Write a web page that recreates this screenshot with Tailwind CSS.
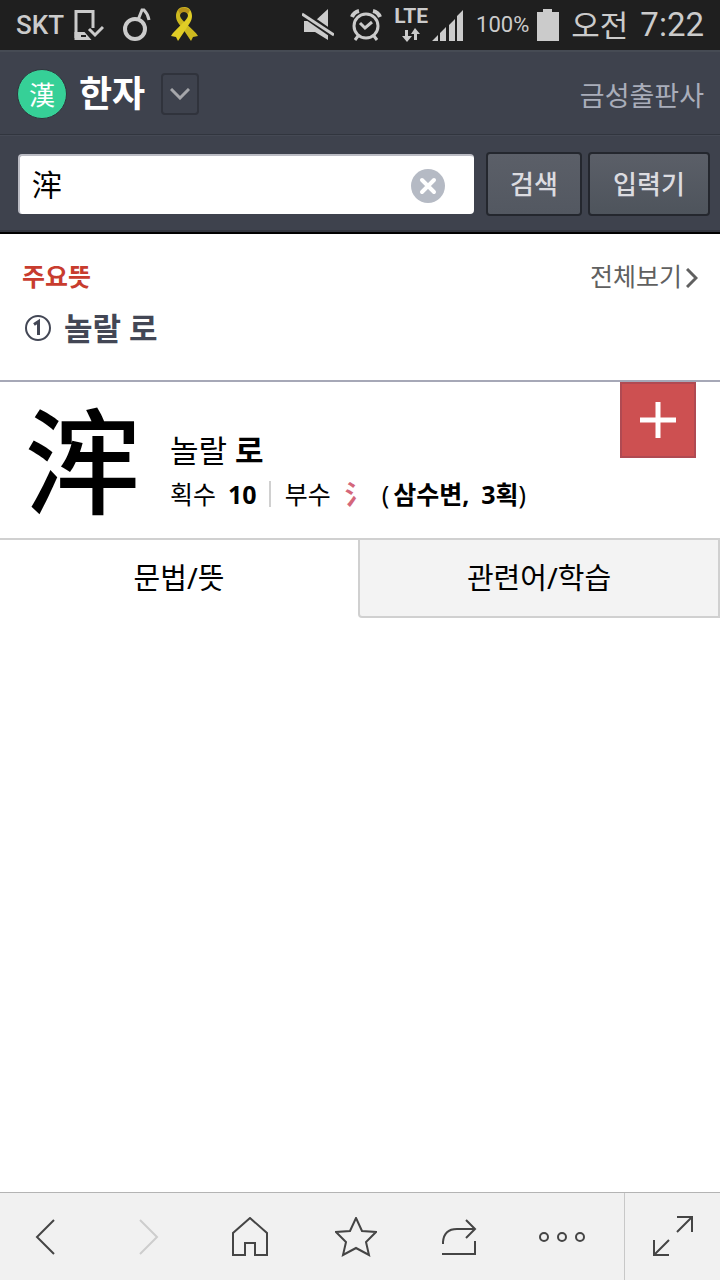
<!DOCTYPE html>
<html lang="ko">
<head>
    <meta charset="UTF-8">
    <meta name="viewport" content="width=device-width, initial-scale=1.0">
    <title>한자 - 浶</title>
    <script src="https://cdn.jsdelivr.net/npm/@tailwindcss/browser@4"></script>
</head>
<body class="min-h-screen flex flex-col bg-white text-black font-['Noto_Sans','Noto_Sans_CJK_KR',sans-serif]">

    <!-- Phone status bar -->
    <div class="h-[50px] shrink-0 px-4 flex items-center justify-between bg-[#1f1f1f] text-[#cbcbcb]">
        <div class="flex items-center">
            <span class="font-['Roboto',sans-serif] font-medium text-[26px] leading-8">SKT</span>
            <svg class="ml-2 w-8 h-8" viewBox="0 0 32 32" fill="none" stroke="currentColor">
                <path d="M21 19V2.500H4V29" stroke-width="3"/>
                <path d="M2.500 23h10l7 8h-17z" fill="currentColor" stroke="none"/>
                <path d="M9 27h5" stroke="#1f1f1f" stroke-width="2"/>
                <path d="M17 20l6 6 8-8" stroke-width="3"/>
            </svg>
            <svg class="ml-4 w-8 h-9" viewBox="0 0 32 36" fill="none" stroke="currentColor">
                <circle cx="15" cy="22" r="10" stroke-width="4"/>
                <path d="M18 13l4-10h2q4 4 5 10" stroke-width="3"/>
            </svg>
            <!-- Yellow ribbon -->
            <svg class="ml-4 w-8 h-9" viewBox="0 0 32 36">
                <path d="M16 0C10 0 8 5 8 9c0 5 3 8 7 13l8 12 2-4 5-1C26 22 13 14 12 9c0-3 2-5 4-5z" fill="#cdb91f"/>
                <path d="M16 0c6 0 8 5 8 9 0 5-3 8-6 13l-8 12-2-4-5-1C7 22 19 14 20 9c0-3-2-5-4-5z" fill="#e0cd26"/>
                <path d="M10 3q6-5 12 0l-2 4q-4-4-8 0z" fill="#b8921a"/>
            </svg>
        </div>
        <div class="flex items-center">
            <svg class="w-8 h-8" viewBox="0 0 32 32" fill="currentColor">
                <path d="M2 12h11L26 0v31L13 23H2z"/>
                <path d="M0 4l33 23" stroke="#1f1f1f" stroke-width="7"/>
                <path d="M0 5l32 21" stroke="currentColor" stroke-width="3"/>
                <path d="M2 14v8h11l5 3z"/>
            </svg>
            <svg class="ml-4 w-8 h-8" viewBox="0 0 32 32" fill="none" stroke="currentColor" stroke-width="3">
                <circle cx="16" cy="17" r="12"/>
                <path d="M10 14l5 5 7-6M8 27l-3 4M24 27l3 4"/>
                <path d="M2 8q2-5 7-6M30 8q-2-5-7-6" stroke-width="4"/>
            </svg>
            <div class="ml-3 flex flex-col items-center">
                <span class="font-['Roboto',sans-serif] font-bold text-[21px] leading-4">LTE</span>
                <svg class="mt-1 w-5 h-[14px]" viewBox="0 0 20 14" fill="currentColor">
                    <path d="M4 2h3v6h4l-5 6-5-6h3zM13 12h3V6h3l-5-6-4 6h3z"/>
                </svg>
            </div>
            <svg class="ml-1 w-8 h-8" viewBox="0 0 32 32" fill="currentColor">
                <path d="M0 32l6-6v6zM8 24l6-6v14H8zM17 16l6-6v22h-6zM25 7l6-6v31h-6z"/>
            </svg>
            <span class="ml-3 font-['Roboto',sans-serif] text-[22px] leading-8">100%</span>
            <svg class="ml-2 w-[22px] h-8" viewBox="0 0 22 32" fill="currentColor">
                <path d="M6 0h9v3h7v29H0V3h6z"/>
            </svg>
            <span class="ml-3 text-[31px] leading-9">오전</span>
            <span class="ml-3 font-['Roboto',sans-serif] text-[33px] leading-9">7:22</span>
        </div>
    </div>

    <!-- Dictionary header -->
    <header class="bg-[#3e424d] border-t-2 border-t-[#464b54] border-b-2 border-b-black">
        <div class="h-[83px] pl-[17px] pr-4 pt-[2px] flex items-center border-b border-[#31353e]">
            <span class="size-[50px] rounded-full border border-[#30343c] bg-[#36d097] text-white flex items-center justify-center font-['Noto_Sans_CJK_KR',sans-serif] text-[26px] leading-8">漢</span>
            <h1 class="ml-3 text-[36px] leading-10 font-bold text-white">한자</h1>
            <button type="button" aria-label="사전 선택" class="ml-4 w-[38px] h-[42px] rounded-sm border-2 border-[#30333c] flex items-center justify-center">
                <svg class="w-5 h-3" viewBox="0 0 20 12" fill="none" stroke="#a5a6aa" stroke-width="3"><path d="M1 1l9 9 9-9"/></svg>
            </button>
            <a href="#" class="ml-auto pt-1 text-[27px] leading-8 text-[#a9adba]">금성출판사</a>
        </div>
        <form class="h-[97px] pt-[2px] pl-[18px] pr-[10px] flex items-center border-t border-t-[#454954] border-b-2 border-b-[#343740]">
            <div class="relative grow min-w-0">
                <input type="text" value="浶" aria-label="한자 검색어" class="block w-full h-[60px] pl-3 pr-16 pb-1 rounded-sm border-t-2 border-l-2 border-[#bbbcc4] bg-white text-[30px] leading-9 outline-none">
                <button type="button" aria-label="지우기" class="absolute right-7 top-1/2 -translate-y-1/2 mt-[2px] size-9">
                    <svg class="w-9 h-9" viewBox="0 0 36 36">
                        <circle cx="18" cy="18" r="17" fill="#b5bac4"/>
                        <path d="M12 12l12 12M24 12L12 24" stroke="#fff" stroke-width="4" stroke-linecap="round"/>
                    </svg>
                </button>
            </div>
            <button type="submit" class="ml-3 w-24 h-16 shrink-0 rounded-sm border-2 border-[#24272e] bg-linear-to-b from-[#5b5f68] to-[#535861] text-[26px] leading-8 font-medium text-[#dcdce0]">검색</button>
            <button type="button" class="ml-[6px] w-[122px] h-16 shrink-0 rounded-sm border-2 border-[#24272e] bg-linear-to-b from-[#5b5f68] to-[#4e545c] text-[26px] leading-8 font-medium text-[#dcdce0]">입력기</button>
        </form>
    </header>

    <main class="grow">
        <!-- Main meanings -->
        <section class="h-[148px] pt-6 px-[22px] border-b-2 border-[#a6a8b7]">
            <div class="flex items-center justify-between">
                <h2 class="text-[25px] leading-9 font-bold text-[#c83c2e]">주요뜻</h2>
                <a href="#" class="flex items-center text-[25px] leading-9 text-[#606060]">전체보기
                    <svg class="ml-1 mt-1 w-3 h-5" viewBox="0 0 12 20" fill="none" stroke="#606060" stroke-width="3"><path d="M1 1l9 9-9 9"/></svg>
                </a>
            </div>
            <ol class="mt-[14px] pl-[2px]">
                <li class="flex items-center text-[31px] leading-10 font-bold text-[#434755]">
                    <svg class="mr-3 w-7 h-7" viewBox="0 0 28 28" fill="none" stroke="currentColor" aria-label="1">
                        <circle cx="14" cy="14" r="12" stroke-width="2"/>
                        <path d="M10 10.500L14.500 7.500V21" stroke-width="3"/>
                    </svg>
                    놀랄 로
                </li>
            </ol>
        </section>

        <!-- Character entry -->
        <section class="h-[158px] px-6 flex items-start border-b-2 border-[#d0d0d0]">
            <span class="mt-[14px] w-[118px] text-center font-['Noto_Sans_CJK_KR',sans-serif] font-medium text-[116px] leading-[118px]">浶</span>
            <div class="ml-7 mt-12">
                <p class="text-[31px] leading-10">놀랄 <b>로</b></p>
                <p class="mt-[6px] flex items-center text-[25px] leading-9 whitespace-nowrap">
                    획수 <b class="ml-3">10</b>
                    <span class="ml-3 mr-[14px] w-[2px] h-[26px] bg-[#d0d0d0]"></span>
                    부수 <span class="ml-[14px] font-['Noto_Sans_CJK_KR',sans-serif] font-bold text-[27px] text-[#d4677b]">氵</span>
                    <span class="ml-[10px]">(</span><b class="ml-1">삼수변,</b><b class="ml-3">3획</b>)
                </p>
            </div>
            <button type="button" aria-label="단어장에 추가" class="ml-auto size-[76px] shrink-0 border-2 border-[#b04a52] bg-[#cd5051] flex items-center justify-center">
                <svg class="w-9 h-9" viewBox="0 0 36 36" stroke="#fff" stroke-width="5"><path d="M18 0v36M0 18h36"/></svg>
            </button>
        </section>

        <!-- Tabs -->
        <nav class="grid grid-cols-2 text-[29px] leading-10">
            <button type="button" class="h-[78px] pb-[2px] pr-[2px]">문법/뜻</button>
            <button type="button" class="h-[78px] -ml-[2px] rounded-bl-sm border-l-2 border-r-2 border-b-2 border-[#d0d0d0] bg-[#f3f3f3]">관련어/학습</button>
        </nav>
    </main>

    <!-- Browser toolbar -->
    <footer class="h-[88px] shrink-0 flex bg-[#f1f1f1] border-t border-[#b4b4b4] text-[#454545]">
        <div class="grow pr-[10px] grid grid-cols-6 items-center justify-items-center">
            <button type="button" aria-label="뒤로">
                <svg class="w-10 h-10" viewBox="0 0 40 40" fill="none" stroke="currentColor" stroke-width="2"><path d="M23 3L6 20l17 17"/></svg>
            </button>
            <button type="button" aria-label="앞으로" disabled class="mr-1 text-[#cdcdcd]">
                <svg class="w-10 h-10" viewBox="0 0 40 40" fill="none" stroke="currentColor" stroke-width="2"><path d="M9 3l17 17L9 37"/></svg>
            </button>
            <button type="button" aria-label="홈" class="mr-3">
                <svg class="w-10 h-10" viewBox="0 0 40 40" fill="none" stroke="currentColor" stroke-width="2"><path d="M20 1L3 16v22h12V26h10v12h12V16z"/></svg>
            </button>
            <button type="button" aria-label="즐겨찾기" class="mr-1">
                <svg class="w-[42px] h-10" viewBox="0 0 42 40" fill="none" stroke="currentColor" stroke-width="2"><path d="M21 1l6 13 14 1-10 10 3 13-13-7-13 7 3-13L1 15l14-1z"/></svg>
            </button>
            <button type="button" aria-label="공유">
                <svg class="w-10 h-10" viewBox="0 0 40 40" fill="none" stroke="currentColor" stroke-width="2"><path d="M3 27v-2q1-13 14-13h18M26 3l9 9-9 9M35 24v13H2"/></svg>
            </button>
            <button type="button" aria-label="더보기">
                <svg class="w-12 h-10" viewBox="0 0 48 40" fill="none" stroke="currentColor" stroke-width="2"><circle cx="5" cy="20" r="4"/><circle cx="23" cy="20" r="4"/><circle cx="41" cy="20" r="4"/></svg>
            </button>
        </div>
        <button type="button" aria-label="전체 화면" class="w-24 flex items-center justify-center border-l border-[#c8c8c8]">
            <svg class="w-[42px] h-[42px]" viewBox="0 0 42 42" fill="none" stroke="currentColor" stroke-width="2"><path d="M25 16L40 1M25 1h15v15M17 24L2 39M2 24v15h15"/></svg>
        </button>
    </footer>

</body>
</html>
